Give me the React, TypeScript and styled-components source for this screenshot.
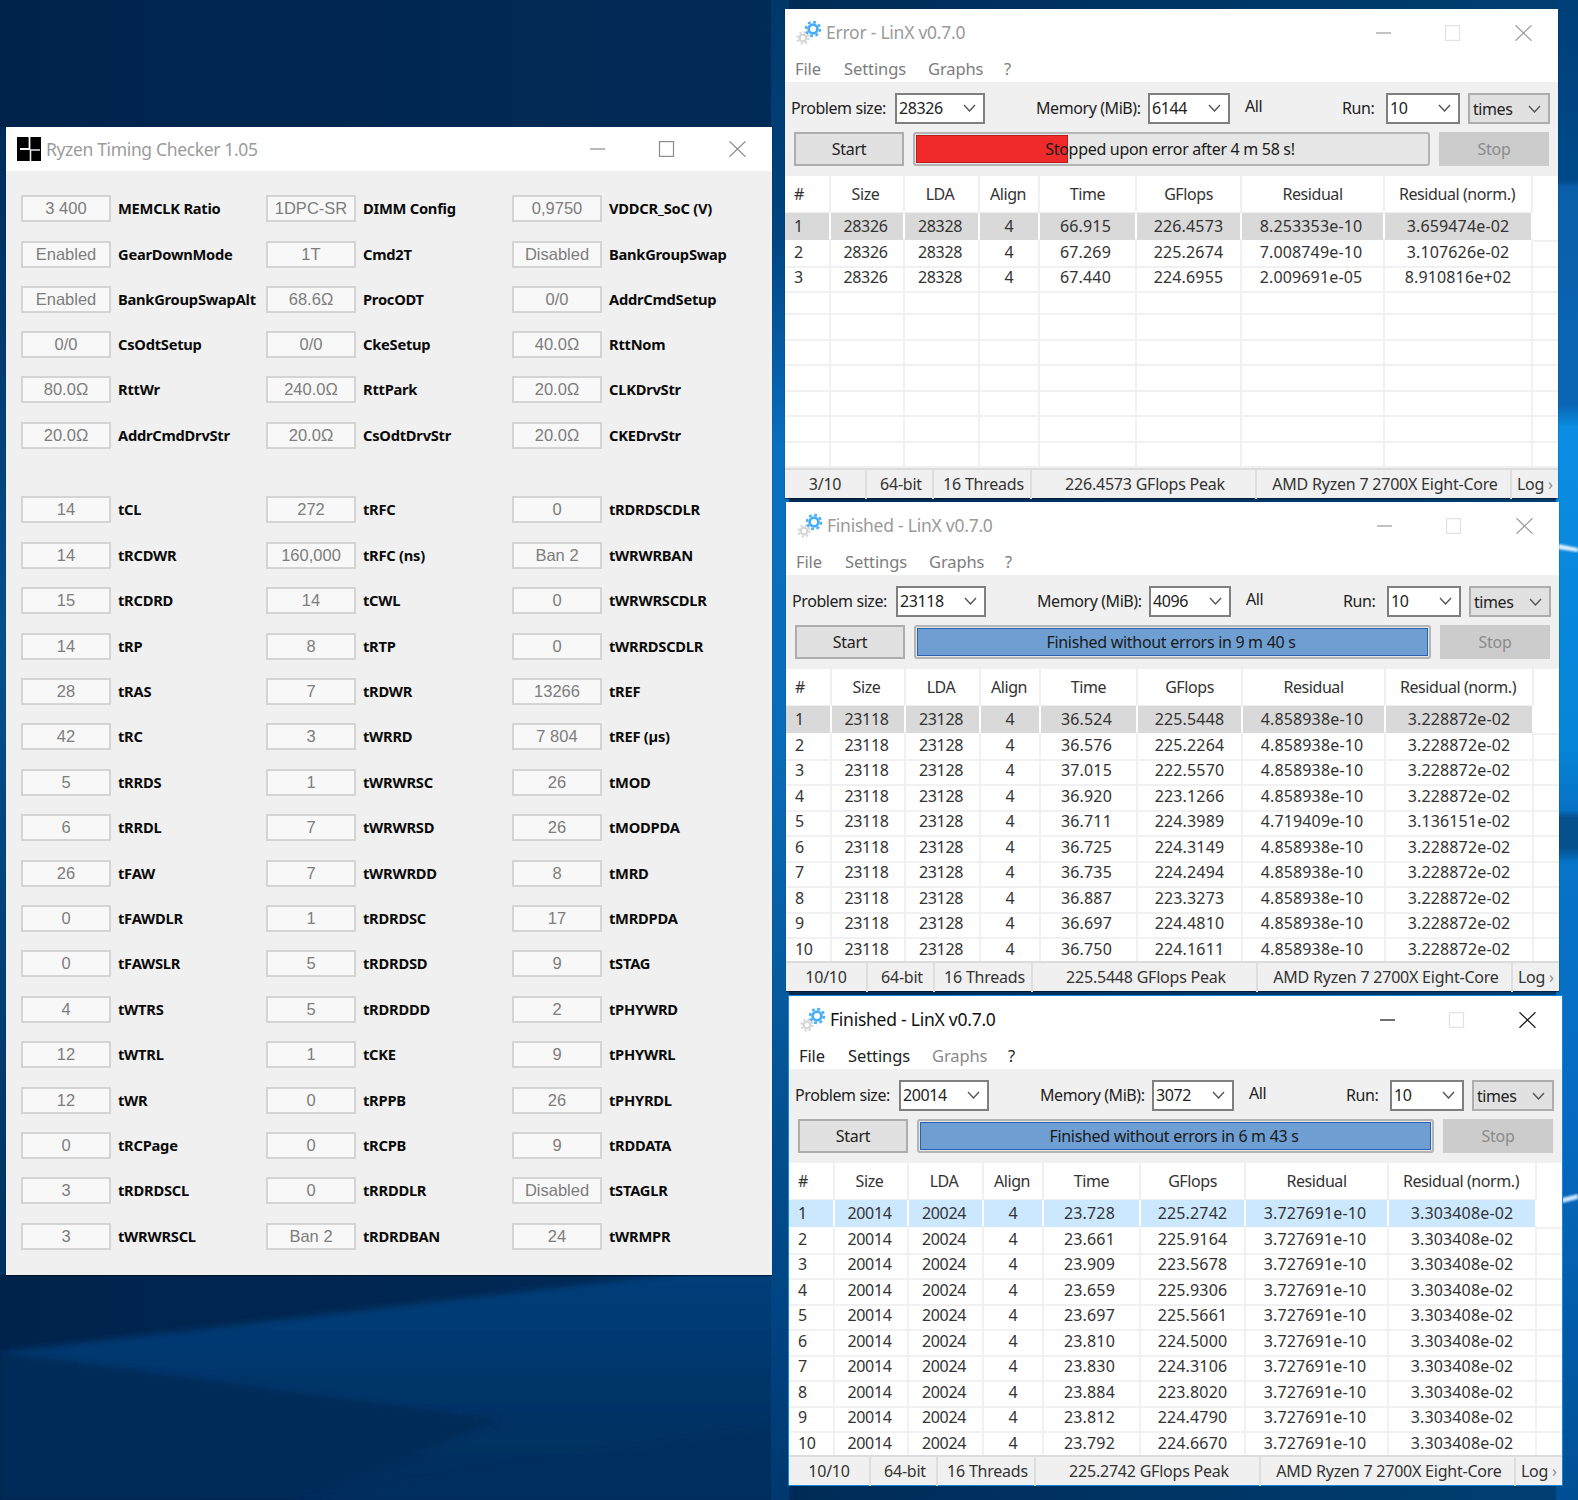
import React from "react";
import styled, { createGlobalStyle } from "styled-components";

const Global = createGlobalStyle`
  html, body { margin: 0; padding: 0; background: #00264e; }
  * { box-sizing: border-box; }
`;

const UI = `"Noto Sans", "Open Sans", sans-serif`;

const Desktop = styled.div`
  position: relative;
  width: 1578px;
  height: 1500px;
  overflow: hidden;
  background: #00264e;
`;

const WallpaperSvg = styled.svg`
  position: absolute;
  inset: 0;
`;

/* ---------- shared window chrome ---------- */
const WindowFrame = styled.section<{ $x: number; $y: number; $w: number; $h: number; $active?: boolean }>`
  position: absolute;
  left: ${(p) => p.$x}px;
  top: ${(p) => p.$y}px;
  width: ${(p) => p.$w}px;
  height: ${(p) => p.$h}px;
  background: #fff;
  display: flex;
  flex-direction: column;
  box-shadow: ${(p) => (p.$active ? "0 0 0 1px #1487dd" : "0 1px 1px rgba(0,0,0,.45)")};
`;

const Controls = styled.div`
  margin-left: auto;
  display: flex;
  align-items: center;
  gap: 54px;
  padding-right: 26px;
`;

const ControlIcon = styled.svg<{ $color: string }>`
  width: 17px;
  height: 16px;
  fill: none;
  stroke: ${(p) => p.$color};
  stroke-width: 1.2;
  display: block;
`;

const MinimizeIcon = styled(ControlIcon)`
  margin-right: -2px;
`;

function WindowControls({ color, maxColor }: { color: string; maxColor: string }) {
  return (
    <Controls>
      <MinimizeIcon $color={color} viewBox="0 0 17 16">
        <path d="M1 8H16" />
      </MinimizeIcon>
      <ControlIcon $color={maxColor} viewBox="0 0 17 16">
        <rect x="1.5" y="0.6" width="14" height="14.8" />
      </ControlIcon>
      <ControlIcon $color={color} viewBox="0 0 17 16">
        <path d="M0.5 0.3L16.5 15.7M16.5 0.3L0.5 15.7" />
      </ControlIcon>
    </Controls>
  );
}

/* ---------- Ryzen Timing Checker ---------- */
const RtcTitleBar = styled.header`
  height: 44px;
  flex: none;
  display: flex;
  align-items: center;
  padding-left: 11px;
`;

const RtcIcon = styled.svg`
  width: 24px;
  height: 24px;
  flex: none;
`;

const RtcTitle = styled.h1`
  margin: 0 0 0 5px;
  font: 400 17.5px/24px ${UI};
  letter-spacing: -0.35px;
  color: #9b9b9b;
`;

const RtcBody = styled.div`
  flex: 1;
  background: #f0f0f0;
  padding: 24.4px 0 0 15px;
`;

const TimingGrid = styled.div<{ $pitch: number; $after?: number }>`
  display: grid;
  grid-template-columns: 245px 246px 1fr;
  grid-auto-rows: 27px;
  row-gap: ${(p) => p.$pitch - 27}px;
  margin-bottom: ${(p) => p.$after ?? 0}px;
`;

const Timing = styled.div`
  display: flex;
  align-items: center;
  gap: 7px;
`;

const TimingValue = styled.div`
  width: 90px;
  height: 27px;
  flex: none;
  border: 2px solid #d4d4d4;
  background: #f8f8f8;
  color: #7d7d7d;
  text-align: center;
  font: 400 16.5px/22px "Liberation Sans", Arial, sans-serif;
`;

const TimingName = styled.div`
  font: 700 14.7px/20px ${UI};
  letter-spacing: -0.25px;
  color: #0a0a0a;
  white-space: nowrap;
  margin-top: -1px;
`;

type Cell = [string, string];
const rtcA: Cell[] = [
  ["3 400", "MEMCLK Ratio"], ["1DPC-SR", "DIMM Config"], ["0,9750", "VDDCR_SoC (V)"],
  ["Enabled", "GearDownMode"], ["1T", "Cmd2T"], ["Disabled", "BankGroupSwap"],
  ["Enabled", "BankGroupSwapAlt"], ["68.6Ω", "ProcODT"], ["0/0", "AddrCmdSetup"],
  ["0/0", "CsOdtSetup"], ["0/0", "CkeSetup"], ["40.0Ω", "RttNom"],
  ["80.0Ω", "RttWr"], ["240.0Ω", "RttPark"], ["20.0Ω", "CLKDrvStr"],
  ["20.0Ω", "AddrCmdDrvStr"], ["20.0Ω", "CsOdtDrvStr"], ["20.0Ω", "CKEDrvStr"],
];
const rtcB: Cell[] = [
  ["14", "tCL"], ["272", "tRFC"], ["0", "tRDRDSCDLR"],
  ["14", "tRCDWR"], ["160,000", "tRFC (ns)"], ["Ban 2", "tWRWRBAN"],
  ["15", "tRCDRD"], ["14", "tCWL"], ["0", "tWRWRSCDLR"],
  ["14", "tRP"], ["8", "tRTP"], ["0", "tWRRDSCDLR"],
  ["28", "tRAS"], ["7", "tRDWR"], ["13266", "tREF"],
  ["42", "tRC"], ["3", "tWRRD"], ["7 804", "tREF (µs)"],
  ["5", "tRRDS"], ["1", "tWRWRSC"], ["26", "tMOD"],
  ["6", "tRRDL"], ["7", "tWRWRSD"], ["26", "tMODPDA"],
  ["26", "tFAW"], ["7", "tWRWRDD"], ["8", "tMRD"],
  ["0", "tFAWDLR"], ["1", "tRDRDSC"], ["17", "tMRDPDA"],
  ["0", "tFAWSLR"], ["5", "tRDRDSD"], ["9", "tSTAG"],
  ["4", "tWTRS"], ["5", "tRDRDDD"], ["2", "tPHYWRD"],
  ["12", "tWTRL"], ["1", "tCKE"], ["9", "tPHYWRL"],
  ["12", "tWR"], ["0", "tRPPB"], ["26", "tPHYRDL"],
  ["0", "tRCPage"], ["0", "tRCPB"], ["9", "tRDDATA"],
  ["3", "tRDRDSCL"], ["0", "tRRDDLR"], ["Disabled", "tSTAGLR"],
  ["3", "tWRWRSCL"], ["Ban 2", "tRDRDBAN"], ["24", "tWRMPR"],
];

function TimingBlock({ items, pitch, after }: { items: Cell[]; pitch: number; after?: number }) {
  return (
    <TimingGrid $pitch={pitch} $after={after}>
      {items.map(([v, n]) => (
        <Timing key={n}>
          <TimingValue>{v}</TimingValue>
          <TimingName>{n}</TimingName>
        </Timing>
      ))}
    </TimingGrid>
  );
}

function RyzenTimingChecker() {
  return (
    <WindowFrame $x={6} $y={127} $w={766} $h={1148}>
      <RtcTitleBar>
        <RtcIcon viewBox="0 0 24 24">
          <rect width="24" height="24" fill="#000" />
          <path d="M12.5 0V12H3" stroke="#fff" strokeWidth="1.8" fill="none" />
          <path d="M13.5 24V13H23" stroke="#e8e8e8" strokeWidth="1.6" fill="none" />
        </RtcIcon>
        <RtcTitle>Ryzen Timing Checker 1.05</RtcTitle>
        <WindowControls color="#8c8c8c" maxColor="#8c8c8c" />
      </RtcTitleBar>
      <RtcBody>
        <TimingBlock items={rtcA} pitch={45.25} after={47.65} />
        <TimingBlock items={rtcB} pitch={45.42} />
      </RtcBody>
    </WindowFrame>
  );
}

/* ---------- LinX ---------- */
const LinxTitleBar = styled.header`
  height: 48px;
  flex: none;
  display: flex;
  align-items: center;
  padding-left: 8px;
`;

const GearSvg = styled.svg`
  width: 30px;
  height: 30px;
  flex: none;
  margin-top: -1px;
`;

const LinxTitle = styled.h2<{ $color: string }>`
  margin: -2px 0 0 3px;
  font: 400 17.5px/24px ${UI};
  letter-spacing: -0.25px;
  color: ${(p) => p.$color};
`;

const MenuBar = styled.nav`
  height: 25px;
  flex: none;
  display: flex;
  align-items: center;
  padding: 0 0 2px 10px;
`;

const MenuItem = styled.span<{ $w: number; $color: string }>`
  width: ${(p) => p.$w}px;
  font: 400 16.5px/24px ${UI};
  letter-spacing: -0.1px;
  color: ${(p) => p.$color};
`;

const Toolbar = styled.div`
  height: 94px;
  flex: none;
  background: #f0f0f0;
  padding-top: 11px;
  display: flex;
  flex-direction: column;
  gap: 8px;
`;

const OptionRow = styled.div`
  display: flex;
  align-items: center;
  height: 31px;
  padding-left: 6px;
`;

const OptionLabel = styled.label<{ $w: number; $ml?: number }>`
  width: ${(p) => p.$w}px;
  margin-left: ${(p) => p.$ml ?? 0}px;
  margin-top: -2px;
  font: 400 16px/22px ${UI};
  letter-spacing: -0.42px;
  color: #222;
  white-space: nowrap;
`;

const AllLabel = styled(OptionLabel)`
  margin-top: -5px;
`;

const Combo = styled.div<{ $w: number; $plain?: boolean; $ml?: number }>`
  width: ${(p) => p.$w}px;
  height: 31px;
  margin-left: ${(p) => p.$ml ?? 0}px;
  flex: none;
  display: flex;
  align-items: center;
  justify-content: space-between;
  padding: 0 7px ${(p) => (p.$plain ? "0" : "2px")} ${(p) => (p.$plain ? "3px" : "2px")};
  border: 2px solid ${(p) => (p.$plain ? "#adadad" : "#7f7f7f")};
  background: ${(p) => (p.$plain ? "#e1e1e1" : "#fff")};
  font: 400 16px/22px ${UI};
  letter-spacing: -0.42px;
  color: #222;
`;

const Chevron = styled.svg`
  width: 13px;
  height: 8px;
  fill: none;
  stroke: #555;
  stroke-width: 1.4;
`;

const ActionRow = styled.div`
  display: flex;
  align-items: stretch;
  gap: 9px;
  height: 34px;
  padding-left: 9px;
`;

const ActionButton = styled.div<{ $disabled?: boolean }>`
  width: 110px;
  flex: none;
  border: 2px solid ${(p) => (p.$disabled ? "#cccccc" : "#adadad")};
  background: ${(p) => (p.$disabled ? "#cccccc" : "#e1e1e1")};
  color: ${(p) => (p.$disabled ? "#8a8a8a" : "#222")};
  text-align: center;
  font: 400 16px/30px ${UI};
  letter-spacing: -0.3px;
`;

const Progress = styled.div`
  position: relative;
  width: 517px;
  flex: none;
  border: 2px solid #b4b4b4;
  border-radius: 3px;
  background: #e6e6e6;
  padding: 1px 3px 1px 0;
  font: 400 16px/28px ${UI};
  letter-spacing: -0.3px;
  color: #1a1a1a;
  text-align: center;
`;

const ProgressFill = styled.div<{ $error: boolean }>`
  position: absolute;
  left: 1px;
  top: 1px;
  bottom: 1px;
  width: ${(p) => (p.$error ? "152px" : "calc(100% - 2px)")};
  background: ${(p) => (p.$error ? "#f02a2a" : "#6f9fd2")};
  border: 1px solid ${(p) => (p.$error ? "#b81e1e" : "#2a62ad")};
`;

const ProgressText = styled.span`
  position: relative;
`;

const COLS = "46px 74px 75px 60px 97px 105px 143px 148px 25px";

const Table = styled.div`
  flex: 1;
  display: flex;
  flex-direction: column;
  background: #fff;
`;

const HeaderRow = styled.div`
  height: 37px;
  flex: none;
  display: grid;
  grid-template-columns: ${COLS};
`;

const HeaderCell = styled.div<{ $left?: boolean; $nudge?: number }>`
  border-right: 2px solid #f0f0f0;
  border-bottom: 1px solid #f0f0f0;
  padding-left: ${(p) => (p.$left ? "9px" : "0")};
  padding-right: ${(p) => p.$nudge ?? 0}px;
  text-align: ${(p) => (p.$left ? "left" : "center")};
  font: 400 16px/36px ${UI};
  letter-spacing: -0.42px;
  color: #333;
  white-space: nowrap;
`;

const BodyRow = styled.div`
  height: 25.5px;
  flex: none;
  display: grid;
  grid-template-columns: ${COLS};
`;

const BodyCell = styled.div<{ $left?: boolean; $bg?: string; $decimal?: boolean; $nudge?: number }>`
  background: ${(p) => p.$bg ?? "transparent"};
  border-right: 2px solid ${(p) => (p.$bg ? "#fff" : "#f1f1f1")};
  border-bottom: 2px solid ${(p) => (p.$bg ? "#fff" : "#f1f1f1")};
  padding-left: ${(p) => (p.$left ? "9px" : "0")};
  padding-right: ${(p) => p.$nudge ?? 0}px;
  text-align: ${(p) => (p.$left ? "left" : "center")};
  font: 400 16px/27px ${UI};
  letter-spacing: ${(p) => (p.$decimal ? "0.15px" : "-0.35px")};
  color: #333;
  white-space: nowrap;
`;

const BlankCell = styled.div`
  border-bottom: 2px solid #f1f1f1;
`;

const StatusBar = styled.footer`
  height: 30px;
  flex: none;
  display: grid;
  grid-template-columns: 82px 67px 98px 225px 255px 1fr;
  background: #f0f0f0;
  border-top: 2px solid #dcdcdc;
`;

const StatusCell = styled.div<{ $first?: boolean }>`
  border-right: 2px solid #dedede;
  text-align: center;
  padding-left: ${(p) => (p.$first ? "0" : "3px")};
  font: 400 16px/29px ${UI};
  letter-spacing: -0.22px;
  color: #333;
  white-space: nowrap;
`;

const LogCell = styled.div`
  padding-left: 5px;
  font: 400 16px/29px ${UI};
  letter-spacing: -0.3px;
  color: #333;
  white-space: nowrap;
`;

const LogArrow = styled.span`
  margin-left: 4px;
  color: #8a8a8a;
`;

type LinxProps = {
  x: number;
  y: number;
  active?: boolean;
  title: string;
  size: string;
  memory: string;
  error?: boolean;
  message: string;
  lda: string;
  rows: [string, string, string?, string?][];
  residual?: string;
  norm?: string;
  selected: string;
  run: string;
  peak: string;
};

const HEAD = ["#", "Size", "LDA", "Align", "Time", "GFlops", "Residual", "Residual (norm.)"];
const HEAD_NUDGE = [0, 3, 3, 2, 0, 0, 0, 2];
const BODY_NUDGE = [0, 3, 3, 0, 4, 0, 3, 0];

function Gears() {
  return (
    <GearSvg viewBox="0 0 30 30" fill="none">
      <circle cx="10" cy="20" r="3.4" stroke="#d6d6d6" strokeWidth="2.4" />
      <circle cx="10" cy="20" r="5.6" stroke="#d6d6d6" strokeWidth="2" strokeDasharray="2.2 2.2" />
      <circle cx="20" cy="11" r="4.4" stroke="#47aef5" strokeWidth="2.8" />
      <circle cx="20" cy="11" r="7" stroke="#47aef5" strokeWidth="2.4" strokeDasharray="2.9 2.6" />
    </GearSvg>
  );
}

function Arrow() {
  return (
    <Chevron viewBox="0 0 13 8">
      <path d="M1 1L6.5 7L12 1" />
    </Chevron>
  );
}

function Linx(p: LinxProps) {
  const ink = p.active ? "#111" : "#9a9a9a";
  const menu = p.active ? "#222" : "#7d7d7d";
  const total = 10;
  return (
    <WindowFrame $x={p.x} $y={p.y} $w={773} $h={489} $active={p.active}>
      <LinxTitleBar>
        <Gears />
        <LinxTitle $color={ink}>{p.title}</LinxTitle>
        <WindowControls color={p.active ? "#111" : "#9a9a9a"} maxColor="#e2e2e2" />
      </LinxTitleBar>
      <MenuBar>
        <MenuItem $w={49} $color={menu}>File</MenuItem>
        <MenuItem $w={84} $color={menu}>Settings</MenuItem>
        <MenuItem $w={76} $color={p.active ? "#8a8a8a" : menu}>Graphs</MenuItem>
        <MenuItem $w={14} $color={menu}>?</MenuItem>
      </MenuBar>
      <Toolbar>
        <OptionRow>
          <OptionLabel $w={104}>Problem size:</OptionLabel>
          <Combo $w={90}>{p.size}<Arrow /></Combo>
          <OptionLabel $w={112} $ml={51}>Memory (MiB):</OptionLabel>
          <Combo $w={82}>{p.memory}<Arrow /></Combo>
          <AllLabel $w={97} $ml={15}>All</AllLabel>
          <OptionLabel $w={44}>Run:</OptionLabel>
          <Combo $w={74}>10<Arrow /></Combo>
          <Combo $w={82} $plain $ml={8}>times<Arrow /></Combo>
        </OptionRow>
        <ActionRow>
          <ActionButton>Start</ActionButton>
          <Progress>
            <ProgressFill $error={!!p.error} />
            <ProgressText>{p.message}</ProgressText>
          </Progress>
          <ActionButton $disabled>Stop</ActionButton>
        </ActionRow>
      </Toolbar>
      <Table>
        <HeaderRow>
          {HEAD.map((h, i) => (
            <HeaderCell key={h} $left={i === 0} $nudge={HEAD_NUDGE[i]}>{h}</HeaderCell>
          ))}
        </HeaderRow>
        {Array.from({ length: total }).map((_, i) => {
          const r = p.rows[i];
          const bg = i === 0 ? p.selected : undefined;
          const values = r
            ? [String(i + 1), p.size, p.lda, "4", r[0], r[1], r[2] ?? p.residual ?? "", r[3] ?? p.norm ?? ""]
            : ["", "", "", "", "", "", "", ""];
          return (
            <BodyRow key={i}>
              {values.map((v, j) => (
                <BodyCell key={j} $left={j === 0} $bg={bg} $decimal={j >= 4} $nudge={BODY_NUDGE[j]}>{v}</BodyCell>
              ))}
              <BlankCell />
            </BodyRow>
          );
        })}
      </Table>
      <StatusBar>
        <StatusCell $first>{p.run}</StatusCell>
        <StatusCell>64-bit</StatusCell>
        <StatusCell>16 Threads</StatusCell>
        <StatusCell>{p.peak}</StatusCell>
        <StatusCell>AMD Ryzen 7 2700X Eight-Core</StatusCell>
        <LogCell>Log<LogArrow>›</LogArrow></LogCell>
      </StatusBar>
    </WindowFrame>
  );
}

function Wallpaper() {
  return (
    <WallpaperSvg width="1578" height="1500" viewBox="0 0 1578 1500">
      <defs>
        <linearGradient id="base" x1="0" y1="0" x2="1" y2="0">
          <stop offset="0" stopColor="#00234b" />
          <stop offset="0.5" stopColor="#002b57" />
          <stop offset="1" stopColor="#003f73" />
        </linearGradient>
        <linearGradient id="lower" x1="0" y1="0" x2="0" y2="1">
          <stop offset="0" stopColor="#003f7c" />
          <stop offset="1" stopColor="#002c5a" />
        </linearGradient>
        <linearGradient id="gap" x1="0" y1="0" x2="0" y2="1">
          <stop offset="0" stopColor="#003768" />
          <stop offset="0.15" stopColor="#00437e" />
          <stop offset="0.3" stopColor="#0a6fc0" />
          <stop offset="0.5" stopColor="#0a6cb8" />
          <stop offset="0.75" stopColor="#03508f" />
          <stop offset="0.9" stopColor="#00417f" />
          <stop offset="1" stopColor="#00386e" />
        </linearGradient>
        <linearGradient id="edge" x1="0" y1="0" x2="0" y2="1">
          <stop offset="0" stopColor="#003f78" />
          <stop offset="0.12" stopColor="#004a8a" />
          <stop offset="0.125" stopColor="#0a5fa8" />
          <stop offset="0.27" stopColor="#0a66b4" />
          <stop offset="0.285" stopColor="#0a8de2" />
          <stop offset="0.5" stopColor="#0684d8" />
          <stop offset="0.54" stopColor="#0672c4" />
          <stop offset="0.545" stopColor="#07508e" />
          <stop offset="0.565" stopColor="#07508e" />
          <stop offset="0.575" stopColor="#0674c8" />
          <stop offset="0.75" stopColor="#066ac0" />
          <stop offset="1" stopColor="#004f94" />
        </linearGradient>
        <linearGradient id="sideLeft" x1="0" y1="0" x2="0" y2="1">
          <stop offset="0" stopColor="#002c5a" />
          <stop offset="0.45" stopColor="#06508e" />
          <stop offset="1" stopColor="#00315f" />
        </linearGradient>
        <filter id="soft" x="-10%" y="-10%" width="120%" height="120%">
          <feGaussianBlur stdDeviation="3" />
        </filter>
        <filter id="soft1">
          <feGaussianBlur stdDeviation="1.2" />
        </filter>
      </defs>
      <rect width="1578" height="1500" fill="url(#base)" />
      <rect x="0" y="127" width="6" height="1148" fill="url(#sideLeft)" />
      <polygon points="0,1352 780,1262 790,1500 300,1500" fill="url(#lower)" filter="url(#soft)" />
      <polygon points="0,1500 0,1352 500,1420 300,1500" fill="#002b59" filter="url(#soft)" />
      <polygon points="300,1500 790,1425 790,1500" fill="#002f5f" filter="url(#soft)" />
      <rect x="771" y="0" width="18" height="1500" fill="url(#gap)" />
      <rect x="1556" y="0" width="22" height="1500" fill="url(#edge)" />
      <polygon points="1558,544 1578,548 1578,552 1558,549" fill="#dff2ff" filter="url(#soft1)" />
      <polygon points="1562,1198 1578,1194 1578,1199 1562,1203" fill="#cfeaff" filter="url(#soft1)" />
    </WallpaperSvg>
  );
}

const errRows: [string, string, string, string][] = [
  ["66.915", "226.4573", "8.253353e-10", "3.659474e-02"],
  ["67.269", "225.2674", "7.008749e-10", "3.107626e-02"],
  ["67.440", "224.6955", "2.009691e-05", "8.910816e+02"],
];
const finRows: [string, string, string?, string?][] = [
  ["36.524", "225.5448"], ["36.576", "225.2264"], ["37.015", "222.5570"], ["36.920", "223.1266"],
  ["36.711", "224.3989", "4.719409e-10", "3.136151e-02"],
  ["36.725", "224.3149"], ["36.735", "224.2494"], ["36.887", "223.3273"], ["36.697", "224.4810"], ["36.750", "224.1611"],
];
const lastRows: [string, string][] = [
  ["23.728", "225.2742"], ["23.661", "225.9164"], ["23.909", "223.5678"], ["23.659", "225.9306"], ["23.697", "225.5661"],
  ["23.810", "224.5000"], ["23.830", "224.3106"], ["23.884", "223.8020"], ["23.812", "224.4790"], ["23.792", "224.6670"],
];

export default function App() {
  return (
    <Desktop>
      <Global />
      <Wallpaper />
      <RyzenTimingChecker />
      <Linx
        x={785} y={9} title="Error - LinX v0.7.0" size="28326" memory="6144" error
        message="Stopped upon error after 4 m 58 s!" lda="28328" rows={errRows}
        selected="#d9d9d9" run="3/10" peak="226.4573 GFlops Peak"
      />
      <Linx
        x={786} y={502} title="Finished - LinX v0.7.0" size="23118" memory="4096"
        message="Finished without errors in 9 m 40 s" lda="23128" rows={finRows}
        residual="4.858938e-10" norm="3.228872e-02"
        selected="#d9d9d9" run="10/10" peak="225.5448 GFlops Peak"
      />
      <Linx
        x={789} y={996} active title="Finished - LinX v0.7.0" size="20014" memory="3072"
        message="Finished without errors in 6 m 43 s" lda="20024" rows={lastRows}
        residual="3.727691e-10" norm="3.303408e-02"
        selected="#cce8ff" run="10/10" peak="225.2742 GFlops Peak"
      />
    </Desktop>
  );
}
